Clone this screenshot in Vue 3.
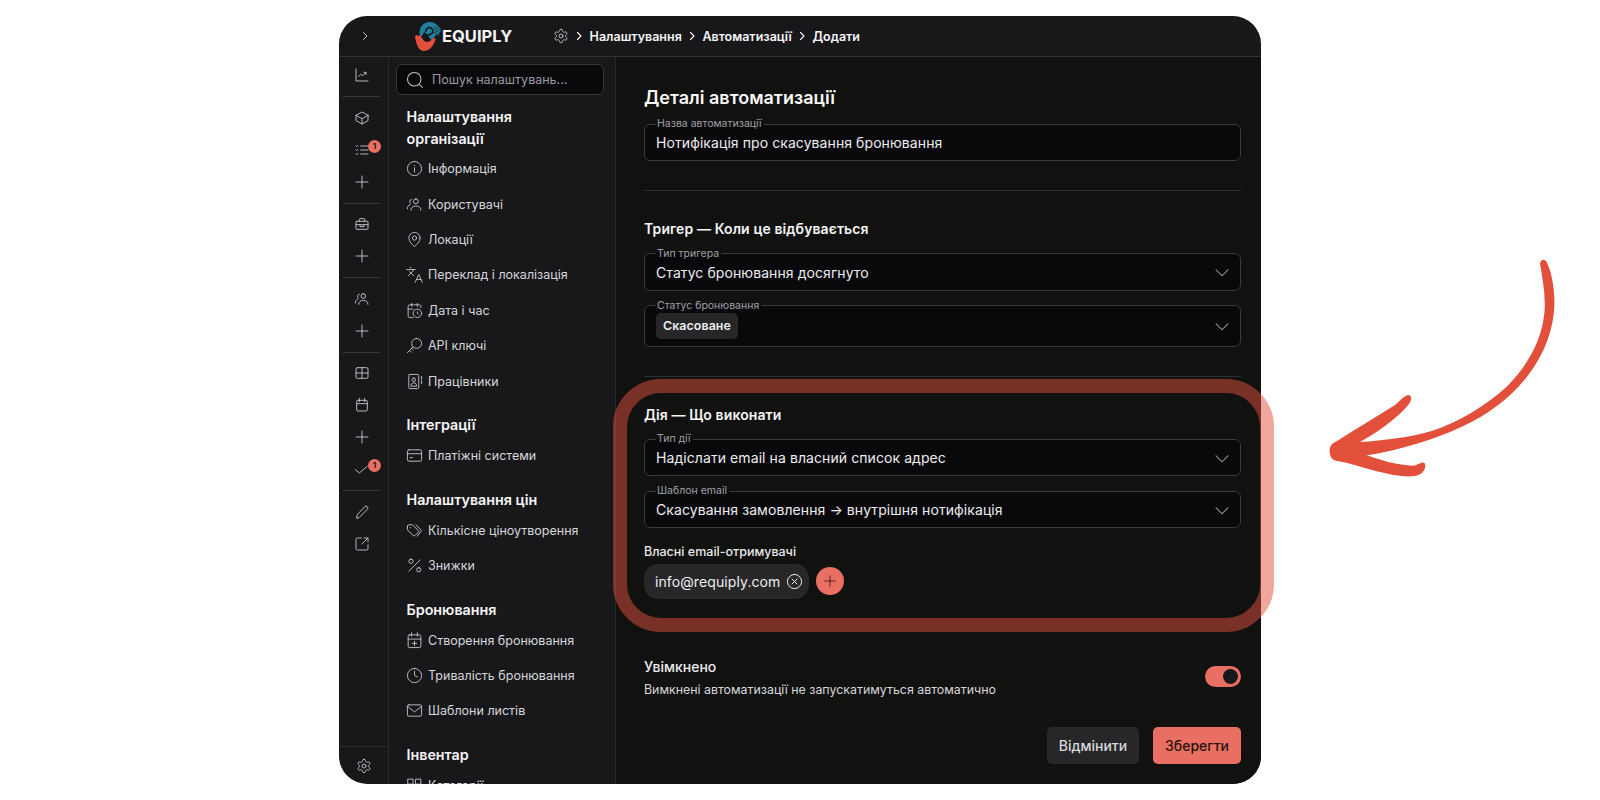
<script setup>
const icons = {
  chart: 'M3 3v18h18 M7 14l3-3 3 2 5-5 M15 8h3v3',
  box: 'M21 8l-9-5-9 5v8l9 5 9-5V8z M3 8l9 5 9-5 M12 13v8',
  tasks: 'M3 6l1 1 2-2 M3 12l1 1 2-2 M3 18l1 1 2-2 M10 6h11 M10 12h11 M10 18h11',
  plus: 'M12 3v18 M3 12h18',
  case: 'M4 8h16a1 1 0 0 1 1 1v10a1 1 0 0 1-1 1H4a1 1 0 0 1-1-1V9a1 1 0 0 1 1-1z M8 8V5a1 1 0 0 1 1-1h6a1 1 0 0 1 1 1v3 M3 13h18 M9 13v3h6v-3',
  users: 'M14 4a3.5 3.5 0 1 0 0 7 3.5 3.5 0 0 0 0-7z M7 20c0-4 3-6 7-6s7 2 7 6 M8 5a3 3 0 0 0-2 5 M2 18c0-3 1-5 4-6',
  table: 'M5 4h14a2 2 0 0 1 2 2v12a2 2 0 0 1-2 2H5a2 2 0 0 1-2-2V6a2 2 0 0 1 2-2z M12 4v16 M3 12h18',
  calendar: 'M6 5h12a2 2 0 0 1 2 2v12a2 2 0 0 1-2 2H6a2 2 0 0 1-2-2V7a2 2 0 0 1 2-2z M4 10h16 M8 2v5 M16 2v5',
  check: 'M2 13l6 5L20 8',
  pencil: 'M4 21l1-5L16 4a2.5 2.5 0 0 1 4 4L8 20z',
  external: 'M11 3H5a2 2 0 0 0-2 2v14a2 2 0 0 0 2 2h14a2 2 0 0 0 2-2v-6 M15 3h6v6 M21 3l-9 9',
  gear: 'M12.22 2h-.44a2 2 0 0 0-2 2v.18a2 2 0 0 1-1 1.73l-.43.25a2 2 0 0 1-2 0l-.15-.08a2 2 0 0 0-2.73.73l-.22.38a2 2 0 0 0 .73 2.73l.15.1a2 2 0 0 1 1 1.72v.51a2 2 0 0 1-1 1.74l-.15.09a2 2 0 0 0-.73 2.73l.22.38a2 2 0 0 0 2.73.73l.15-.08a2 2 0 0 1 2 0l.43.25a2 2 0 0 1 1 1.73V20a2 2 0 0 0 2 2h.44a2 2 0 0 0 2-2v-.18a2 2 0 0 1 1-1.73l.43-.25a2 2 0 0 1 2 0l.15.08a2 2 0 0 0 2.73-.73l.22-.39a2 2 0 0 0-.73-2.73l-.15-.08a2 2 0 0 1-1-1.74v-.5a2 2 0 0 1 1-1.74l.15-.09a2 2 0 0 0 .73-2.73l-.22-.38a2 2 0 0 0-2.73-.73l-.15.08a2 2 0 0 1-2 0l-.43-.25a2 2 0 0 1-1-1.73V4a2 2 0 0 0-2-2z M15 12a3 3 0 1 1-6 0 3 3 0 0 1 6 0z',
  search: 'M11 2a9 9 0 1 0 0 18 9 9 0 0 0 0-18z M22 22l-4.600-4.600',
  info: 'M12 2a10 10 0 1 0 0 20 10 10 0 0 0 0-20z M12 17v-6 M12 7.500v.5',
  pin: 'M20 10c0 5-6 10.500-8 12-2-1.500-8-7-8-12a8 8 0 0 1 16 0z M15 10a3 3 0 1 1-6 0 3 3 0 0 1 6 0z',
  lang: 'M5 8l6 6 M3 14l6-6 2-3 M1 5h12 M6 2h1 M23 23l-5-11-5 11 M15 19h6',
  dateTime: 'M16 14v2l1.500 1 M16 2v4 M8 2v4 M21 8V6a2 2 0 0 0-2-2H5a2 2 0 0 0-2 2v14a2 2 0 0 0 2 2h5 M3 10h7 M22 16a6 6 0 1 1-12 0 6 6 0 0 1 12 0z',
  key: 'M15 2a7 7 0 1 0 0 14 7 7 0 0 0 0-14z M10 14L2 22 M5 19l2.500 2.500 M8 16l2 2',
  staff: 'M5 2h11a2 2 0 0 1 2 2v16a2 2 0 0 1-2 2H5a1 1 0 0 1-1-1V3a1 1 0 0 1 1-1z M22 5v4 M22 11v4 M11 7a2.500 2.500 0 1 0 0 5 2.500 2.500 0 0 0 0-5z M7 18c0-2.500 1.500-4 4-4s4 1.500 4 4z',
  card: 'M4 4h16a2 2 0 0 1 2 2v12a2 2 0 0 1-2 2H4a2 2 0 0 1-2-2V6a2 2 0 0 1 2-2z M2 9.500h20 M6 15h3',
  tags: 'M2 6v5l8 8a2 2 0 0 0 2.800 0l4.400-4.400a2 2 0 0 0 0-2.800L9 4H4a2 2 0 0 0-2 2z M6 8h.5 M14 4l8 8-6 8',
  percent: 'M20 4L4 20 M7 3a3 3 0 1 0 0 6 3 3 0 0 0 0-6z M18 15a3 3 0 1 0 0 6 3 3 0 0 0 0-6z',
  calendarPlus: 'M5 4h14a2 2 0 0 1 2 2v14a2 2 0 0 1-2 2H5a2 2 0 0 1-2-2V6a2 2 0 0 1 2-2z M3 10h18 M8 1v5 M16 1v5 M12 13v6 M9 16h6',
  clock: 'M12 2a10 10 0 1 0 0 20 10 10 0 0 0 0-20z M12 6v6l4 2',
  mail: 'M4 4h16a2 2 0 0 1 2 2v12a2 2 0 0 1-2 2H4a2 2 0 0 1-2-2V6a2 2 0 0 1 2-2z M2 6l10 8 10-8',
  grid: 'M3 3h7v7H3z M14 3h7v7h-7z M3 14h7v7H3z M14 14h7v7h-7z',
  chevronRight: 'M9 5l7 7-7 7',
  chevronDown: 'M4 9l8 8 8-8',
  xCircle: 'M12 2a10 10 0 1 0 0 20 10 10 0 0 0 0-20z M8.500 8.500l7 7 M15.500 8.500l-7 7'
}

// null marks a divider in the rail
const rail = [
  { icon: 'chart' }, null,
  { icon: 'box' }, { icon: 'tasks', badge: 1 }, { icon: 'plus' }, null,
  { icon: 'case' }, { icon: 'plus' }, null,
  { icon: 'users' }, { icon: 'plus' }, null,
  { icon: 'table' }, { icon: 'calendar' }, { icon: 'plus' }, { icon: 'check', badge: 1 }, null,
  { icon: 'pencil' }, { icon: 'external' }
]

const groups = [
  {
    title: 'Налаштування організації',
    items: [
      { icon: 'info', label: 'Інформація' },
      { icon: 'users', label: 'Користувачі' },
      { icon: 'pin', label: 'Локації' },
      { icon: 'lang', label: 'Переклад і локалізація' },
      { icon: 'dateTime', label: 'Дата і час' },
      { icon: 'key', label: 'API ключі' },
      { icon: 'staff', label: 'Працівники' }
    ]
  },
  { title: 'Інтеграції', items: [{ icon: 'card', label: 'Платіжні системи' }] },
  {
    title: 'Налаштування цін',
    items: [
      { icon: 'tags', label: 'Кількісне ціноутворення' },
      { icon: 'percent', label: 'Знижки' }
    ]
  },
  {
    title: 'Бронювання',
    items: [
      { icon: 'calendarPlus', label: 'Створення бронювання' },
      { icon: 'clock', label: 'Тривалість бронювання' },
      { icon: 'mail', label: 'Шаблони листів' }
    ]
  },
  { title: 'Інвентар', items: [{ icon: 'grid', label: 'Категорії' }] }
]

const crumbs = ['Налаштування', 'Автоматизації', 'Додати']
</script>

<template>
  <div class="page">
    <div class="app">
      <header class="topbar">
        <div class="topbar-toggle">
          <svg class="icon small" viewBox="0 0 24 24"><path :d="icons.chevronRight" /></svg>
        </div>
        <div class="brand">
          <svg class="brand-mark" viewBox="0 0 27 29">
            <path fill="#1f7f9c" d="M5 14C3 6 8 0 15 0c3 0 5 1 7 3l4 4-1 1 1 2-2 1v2l-3 0-3 4c-2 1-3 0-4-2l-2-3-3-2-2 4z" />
            <path fill="none" stroke="#18181b" stroke-width="1.600" d="M11 10a3.500 3.500 0 1 1 3 2.500l-1 1.500" />
            <path fill="none" stroke="#18181b" stroke-width=".7" d="M19 4l6 4 M19 7l5 3.500 M18 10l5 2.500" />
            <path fill="#e2503c" d="M0 14l2-1 2 1 1-1 2 3c2 4 5 5 8 3l3-3 3 1-2 4c-2 5-6 8-10 8-5 0-8-6-9-15z" />
          </svg>
          <span class="brand-name">EQUIPLY</span>
        </div>
        <nav class="crumbs">
          <svg class="icon" viewBox="0 0 24 24"><path :d="icons.gear" /></svg>
          <template v-for="crumb in crumbs" :key="crumb">
            <svg class="icon crumb-sep" viewBox="0 0 24 24"><path :d="icons.chevronRight" /></svg>
            <span>{{ crumb }}</span>
          </template>
        </nav>
      </header>

      <div class="body">
        <aside class="rail">
          <template v-for="(item, i) in rail" :key="i">
            <div v-if="!item" class="rail-line"></div>
            <div v-else class="rail-item">
              <svg class="icon" viewBox="0 0 24 24"><path :d="icons[item.icon]" /></svg>
              <span v-if="item.badge" class="badge">{{ item.badge }}</span>
            </div>
          </template>
          <div class="rail-foot">
            <svg class="icon" viewBox="0 0 24 24"><path :d="icons.gear" /></svg>
          </div>
        </aside>

        <aside class="side">
          <div class="search">
            <svg class="icon" viewBox="0 0 24 24"><path :d="icons.search" /></svg>
            <span>Пошук налаштувань...</span>
          </div>
          <section v-for="group in groups" :key="group.title" class="side-group">
            <h4>{{ group.title }}</h4>
            <div v-for="item in group.items" :key="item.label" class="side-item">
              <svg class="icon" viewBox="0 0 24 24"><path :d="icons[item.icon]" /></svg>
              <span>{{ item.label }}</span>
            </div>
          </section>
        </aside>

        <main class="main">
          <h2 class="page-title">Деталі автоматизації</h2>
          <fieldset class="field first">
            <legend>Назва автоматизації</legend>
            <div class="field-row">Нотифікація про скасування бронювання</div>
          </fieldset>

          <hr />

          <h3 class="block-title">Тригер — Коли це відбувається</h3>
          <fieldset class="field first">
            <legend>Тип тригера</legend>
            <div class="field-row">
              Статус бронювання досягнуто
              <svg class="icon chevron" viewBox="0 0 24 24"><path :d="icons.chevronDown" /></svg>
            </div>
          </fieldset>
          <fieldset class="field tall">
            <legend>Статус бронювання</legend>
            <div class="field-row">
              <span class="tag">Скасоване</span>
              <svg class="icon chevron" viewBox="0 0 24 24"><path :d="icons.chevronDown" /></svg>
            </div>
          </fieldset>

          <hr />

          <h3 class="block-title">Дія — Що виконати</h3>
          <fieldset class="field first">
            <legend>Тип дії</legend>
            <div class="field-row">
              Надіслати email на власний список адрес
              <svg class="icon chevron" viewBox="0 0 24 24"><path :d="icons.chevronDown" /></svg>
            </div>
          </fieldset>
          <fieldset class="field">
            <legend>Шаблон email</legend>
            <div class="field-row">
              Скасування замовлення → внутрішня нотифікація
              <svg class="icon chevron" viewBox="0 0 24 24"><path :d="icons.chevronDown" /></svg>
            </div>
          </fieldset>

          <div class="recipients-label">Власні email-отримувачі</div>
          <div class="recipients">
            <span class="email">
              info@requiply.com
              <svg class="icon" viewBox="0 0 24 24"><path :d="icons.xCircle" /></svg>
            </span>
            <span class="add">
              <svg class="icon" viewBox="0 0 24 24"><path :d="icons.plus" /></svg>
            </span>
          </div>

          <div class="enabled">
            <div>
              <div class="enabled-title">Увімкнено</div>
              <div class="enabled-text">Вимкнені автоматизації не запускатимуться автоматично</div>
            </div>
            <span class="toggle"><span class="knob"></span></span>
          </div>

          <div class="actions">
            <button class="btn cancel">Відмінити</button>
            <button class="btn save">Зберегти</button>
          </div>
        </main>
      </div>
    </div>

    <!-- annotations laid over the screenshot -->
    <div class="highlight"></div>
    <svg class="arrow" viewBox="0 0 780 720">
      <path fill="#e2503c" d="M660 40C662 30 672 24 680 36C695 65 705 120 703 170C700 235 675 310 625 375C575 440 505 495 425 530C345 568 240 600 140 616C180 630 240 648 280 647C295 645 305 632 314 640C320 650 312 668 295 675C270 684 225 678 170 664C125 652 85 638 55 634C35 632 28 618 29 600C30 588 36 580 50 574C110 535 170 500 225 465C240 453 252 436 266 435C277 437 276 452 262 468C225 510 175 545 120 576C190 572 270 562 335 543C420 515 500 465 560 410C625 345 665 270 673 190C678 140 668 90 660 40z" />
    </svg>
  </div>
</template>

<style scoped>
.page {
  position: relative;
  height: 800px;
  padding: 16px 0 0 339px;
  box-sizing: border-box;
  overflow: hidden;
  font-family: Inter, "Liberation Sans", sans-serif;
  color: #ededef;
}

.app {
  width: 922px;
  height: 768px;
  display: flex;
  flex-direction: column;
  border-radius: 28px;
  overflow: hidden;
  background: #18181b;
}

.icon {
  width: 16px;
  height: 16px;
  flex: none;
  fill: none;
  stroke: #c4c4c8;
  stroke-width: 1.4;
  stroke-linecap: round;
  stroke-linejoin: round;
}

.icon.small {
  width: 12px;
  height: 12px;
  stroke-width: 2;
}

/* top bar */
.topbar {
  height: 41px;
  flex: none;
  display: flex;
  align-items: center;
  box-sizing: border-box;
  border-bottom: 1px solid #303034;
}

.topbar-toggle {
  width: 52px;
  display: flex;
  justify-content: center;
}

.brand {
  margin-left: 24px;
  width: 131px;
  display: flex;
  align-items: center;
  flex: none;
}

.brand-mark {
  width: 27px;
  height: 29px;
  flex: none;
}

.brand-name {
  font-size: 16.500px;
  font-weight: 700;
  color: #f4f4f5;
}

.crumbs {
  margin-left: 7px;
  display: flex;
  align-items: center;
  gap: 4.300px;
  font-size: 12.500px;
  font-weight: 600;
  color: #f4f4f5;
}

.crumb-sep {
  width: 12px;
  height: 12px;
  stroke: #f4f4f5;
  stroke-width: 2.200;
}

.body {
  flex: 1;
  display: flex;
  min-height: 0;
}

/* left rail */
.rail {
  width: 50px;
  flex: none;
  display: flex;
  flex-direction: column;
  box-sizing: border-box;
  padding: 2px 8px 0 4px;
  border-right: 1px solid #2a2a2e;
}

.rail-item {
  position: relative;
  height: 32px;
  flex: none;
  display: flex;
  align-items: center;
  justify-content: center;
}

.rail-line {
  height: 1px;
  flex: none;
  margin: 5px 0 4.500px;
  background: #38383c;
}

.badge {
  position: absolute;
  left: 25px;
  top: 6px;
  width: 13px;
  height: 13px;
  border-radius: 50%;
  background: #e96f62;
  color: #18181b;
  font-size: 8px;
  font-weight: 700;
  line-height: 13px;
  text-align: center;
}

.rail-foot {
  margin: auto -8px 0 -4px;
  height: 37px;
  display: flex;
  align-items: center;
  justify-content: center;
  border-top: 1px solid #2a2a2e;
}

/* settings sidebar */
.side {
  width: 227px;
  flex: none;
  box-sizing: border-box;
  padding: 7px 11px 0 7px;
  border-right: 1px solid #2a2a2e;
  overflow: hidden;
}

.search {
  height: 31px;
  box-sizing: border-box;
  display: flex;
  align-items: center;
  gap: 8px;
  padding-left: 9px;
  border: 1px solid #38383c;
  border-radius: 6px;
  background: #09090b;
  font-size: 12.500px;
  color: #9a9aa0;
}

.search .icon {
  width: 18px;
  height: 18px;
}

.side-group {
  margin-top: 15.700px;
  padding-left: 10.500px;
}

.search + .side-group {
  margin-top: 11px;
}

.side-group h4 {
  max-width: 165px;
  margin: 0 0 2px;
  font-size: 14.300px;
  font-weight: 600;
  line-height: 21.500px;
  color: #f4f4f5;
}

.side-item {
  height: 35.400px;
  display: flex;
  align-items: center;
  gap: 5.500px;
  font-size: 12.500px;
  color: #d6d6da;
}

.side-item .icon {
  width: 17px;
  height: 17px;
  margin-left: -1px;
  stroke-width: 1.300;
}

/* main form */
.main {
  flex: 1;
  min-width: 0;
  box-sizing: border-box;
  padding: 29px 20px 20px 28px;
  background: #111110;
}

.page-title {
  margin: 0 0 8px;
  font-size: 18px;
  font-weight: 600;
  line-height: 24px;
  color: #f8f8f8;
}

.block-title {
  margin: 0 0 8.500px;
  font-size: 14px;
  font-weight: 600;
  line-height: 20px;
  letter-spacing: 0.1px;
  color: #f4f4f5;
}

hr {
  height: 1px;
  margin: 29px 0 28px;
  border: 0;
  background: #2f2f33;
}

.field {
  height: 43px;
  margin: 9px 0 0;
  padding: 0 12px 5px 11px;
  box-sizing: border-box;
  min-width: 0;
  border: 1px solid #3a3a40;
  border-radius: 6px;
  background: #09090b;
}

.field.first {
  margin-top: 0;
}

.field.tall {
  height: 47px;
}

.field legend {
  padding: 0 2px 0 1px;
  font-size: 10.500px;
  line-height: 12px;
  color: #a0a0a6;
}

.field-row {
  height: 100%;
  display: flex;
  align-items: center;
  justify-content: space-between;
  font-size: 14px;
  letter-spacing: 0.08px;
  color: #ededef;
}

.chevron {
  stroke: #a8a8ae;
  width: 18px;
  height: 18px;
  margin-right: -3px;
}

.tag {
  padding: 0 7px;
  border-radius: 5px;
  background: #27272a;
  font-size: 12.400px;
  font-weight: 600;
  line-height: 26px;
}

.recipients-label {
  margin-top: 15.500px;
  font-size: 12.500px;
  font-weight: 500;
  line-height: 16px;
  color: #e8e8ea;
}

.recipients {
  margin-top: 4px;
  display: flex;
  align-items: center;
  gap: 7px;
}

.email {
  height: 35px;
  display: inline-flex;
  align-items: center;
  gap: 6px;
  padding: 0 6px 0 11px;
  border-radius: 14px;
  background: #27272a;
  font-size: 14px;
  letter-spacing: 0.1px;
}

.email .icon {
  width: 17px;
  height: 17px;
  stroke: #ededef;
}

.add {
  width: 28px;
  height: 28px;
  display: flex;
  align-items: center;
  justify-content: center;
  border-radius: 50%;
  background: #e96f62;
}

.add .icon {
  width: 14px;
  height: 14px;
  stroke: #3a1a16;
}

.enabled {
  margin-top: 58px;
  display: flex;
  align-items: center;
  justify-content: space-between;
}

.enabled-title {
  font-size: 14px;
  font-weight: 500;
  line-height: 20px;
}

.enabled-text {
  margin-top: 5px;
  font-size: 12.400px;
  line-height: 16px;
  color: #d6d6da;
}

.toggle {
  width: 36px;
  height: 21px;
  display: flex;
  align-items: center;
  justify-content: flex-end;
  box-sizing: border-box;
  padding-right: 3px;
  border-radius: 11px;
  background: #e96f62;
  margin-bottom: 2px;
}

.knob {
  width: 15px;
  height: 15px;
  border-radius: 50%;
  background: #18181b;
}

.actions {
  margin-top: 29px;
  display: flex;
  justify-content: flex-end;
  gap: 14px;
}

.btn {
  height: 37px;
  border: 0;
  border-radius: 5px;
  font-family: inherit;
  font-size: 14px;
  font-weight: 500;
}

.cancel {
  width: 92px;
  background: #27272a;
  color: #d8d8dc;
}

.save {
  width: 88px;
  background: #e96f62;
  color: #2a1210;
}

/* annotations */
.highlight {
  position: absolute;
  left: 613px;
  top: 379px;
  width: 661px;
  height: 253px;
  box-sizing: border-box;
  border: 14px solid rgba(226, 80, 60, 0.5);
  border-radius: 48px;
  pointer-events: none;
}

.arrow {
  position: absolute;
  left: 1320px;
  top: 250px;
  width: 260px;
  height: 240px;
}
</style>

<style>
body {
  background: #fff;
}
</style>
